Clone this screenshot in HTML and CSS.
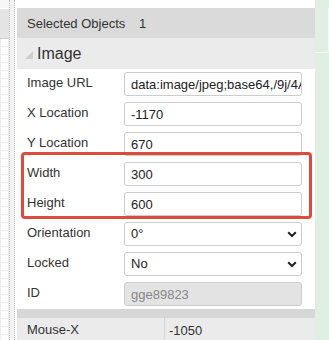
FILE: index.html
```html
<!DOCTYPE html>
<html>
<head>
    <title>Properties</title>
    <meta charset="UTF-8">
    <link rel="stylesheet" href="styles.css">
</head>
<body>
    <div class="screen">
        <div class="canvas-edge">
            <div class="canvas-head"></div>
            <div class="canvas-grid"></div>
        </div>
        <div class="splitter"></div>
        <div class="panel-wrap">
            <div class="panel">
                <div class="row-selected">
                    <span class="sel-label">Selected Objects</span>
                    <span class="sel-value">1</span>
                </div>
                <div class="group-head">
                    <span class="tri"></span>
                    <span>Image</span>
                </div>
                <div class="form">
                    <div class="form-row">
                        <label>Image URL</label>
                        <div class="field">data:image/jpeg;base64,/9j/4AAQSkZJRgABAQ</div>
                    </div>
                    <div class="form-row">
                        <label>X Location</label>
                        <div class="field">-1170</div>
                    </div>
                    <div class="form-row">
                        <label>Y Location</label>
                        <div class="field">670</div>
                    </div>
                    <div class="form-row">
                        <label>Width</label>
                        <div class="field">300</div>
                    </div>
                    <div class="form-row">
                        <label>Height</label>
                        <div class="field">600</div>
                    </div>
                    <div class="form-row">
                        <label>Orientation</label>
                        <div class="field select">
                            <span>0°</span>
                            <svg width="10" height="7" viewBox="0 0 10 7"><path d="M1.2 1.3 L5 5 L8.8 1.3" fill="none" stroke="#222" stroke-width="2"/></svg>
                        </div>
                    </div>
                    <div class="form-row">
                        <label>Locked</label>
                        <div class="field select">
                            <span>No</span>
                            <svg width="10" height="7" viewBox="0 0 10 7"><path d="M1.2 1.3 L5 5 L8.8 1.3" fill="none" stroke="#222" stroke-width="2"/></svg>
                        </div>
                    </div>
                    <div class="form-row">
                        <label>ID</label>
                        <div class="field disabled">gge89823</div>
                    </div>
                </div>
                <div class="band"></div>
                <div class="row-mouse">
                    <span class="mouse-label">Mouse-X</span>
                    <span class="mouse-value">-1050</span>
                </div>
                <div class="highlight"></div>
            </div>
        </div>
        <div class="side-green">
            <div class="green-card"></div>
        </div>
    </div>
</body>
</html>
```

FILE: styles.css
```css
body {
    margin: 0;
    font-family: "Liberation Sans", Arial, sans-serif;
    font-size: 13px;
    color: #333;
    background-color: #fff;
}
.screen {
    display: flex;
    width: 329px;
    height: 340px;
    overflow: hidden;
}
.canvas-edge {
    width: 9px;
    display: flex;
    flex-direction: column;
}
.canvas-head {
    height: 8px;
    background-color: #f7f7f7;
    border-bottom: 1px solid #fff;
}
.canvas-head + .canvas-grid {
    border-top: 29px solid #e4e4e4;
    box-shadow: inset 0 1px 0 #cfcfcf;
}
.canvas-grid {
    flex: 1;
    background-color: #fff;
    background-image:
        linear-gradient(#eee 1px, transparent 1px),
        linear-gradient(90deg, #eee 1px, transparent 1px);
    background-size: 8px 8px;
}
.splitter {
    width: 4px;
    margin-right: 2px;
    background-color: #f3f3f3;
    border-left: 1px dotted #b9b9b9;
    border-right: 1px dotted #b9b9b9;
}
.panel-wrap {
    width: 298px;
    padding-top: 8px;
}
.panel {
    position: relative;
    background-color: #fff;
    height: 332px;
}
.row-selected {
    height: 30px;
    background-color: #dadada;
    display: flex;
    align-items: center;
    padding-left: 10px;
}
.sel-label {
    width: 112px;
}
.group-head {
    height: 31px;
    background-color: #ebebeb;
    display: flex;
    align-items: center;
    padding-left: 8px;
    font-size: 16px;
    color: #333;
}
.tri {
    width: 0;
    height: 0;
    border-left: 8px solid transparent;
    border-bottom: 8px solid #cfcfcf;
    margin-right: 4px;
    margin-top: 2px;
}
.form-row {
    height: 30px;
    display: flex;
    align-items: flex-start;
    padding-left: 10px;
}
.form-row label {
    width: 97px;
    padding-top: 6px;
    line-height: 16px;
}
.field {
    width: 178px;
    height: 24px;
    margin-top: 3px;
    box-sizing: border-box;
    border: 1px solid #ccc;
    border-radius: 3px;
    padding: 0 6px;
    line-height: 24px;
    white-space: nowrap;
    overflow: hidden;
    color: #222;
    background-color: #fff;
}
.select {
    display: flex;
    justify-content: space-between;
    align-items: center;
    padding-right: 4px;
}
.disabled {
    background-color: #e3e3e3;
    color: #888;
}
.band {
    height: 9px;
    background-color: #d7d7d7;
}
.row-mouse {
    height: 24px;
    background-color: #ebebeb;
    display: flex;
    align-items: center;
    padding-left: 10px;
}
.mouse-label {
    width: 137px;
    height: 100%;
    line-height: 24px;
    border-right: 1px solid #d4d4d4;
    margin-right: 4px;
}
.highlight {
    position: absolute;
    left: 4px;
    top: 144px;
    width: 291px;
    height: 67px;
    box-sizing: border-box;
    border: 3px solid #dc4b3e;
    border-radius: 4px;
}
.side-green {
    width: 14px;
    background-color: #e0efe4;
    padding-top: 8px;
}
.green-card {
    margin-left: 0;
    height: 44px;
    border-right: 1px solid #f2f8f3;
    border-bottom: 1px solid #f2f8f3;
    border-radius: 0 0 3px 0;
}
```
